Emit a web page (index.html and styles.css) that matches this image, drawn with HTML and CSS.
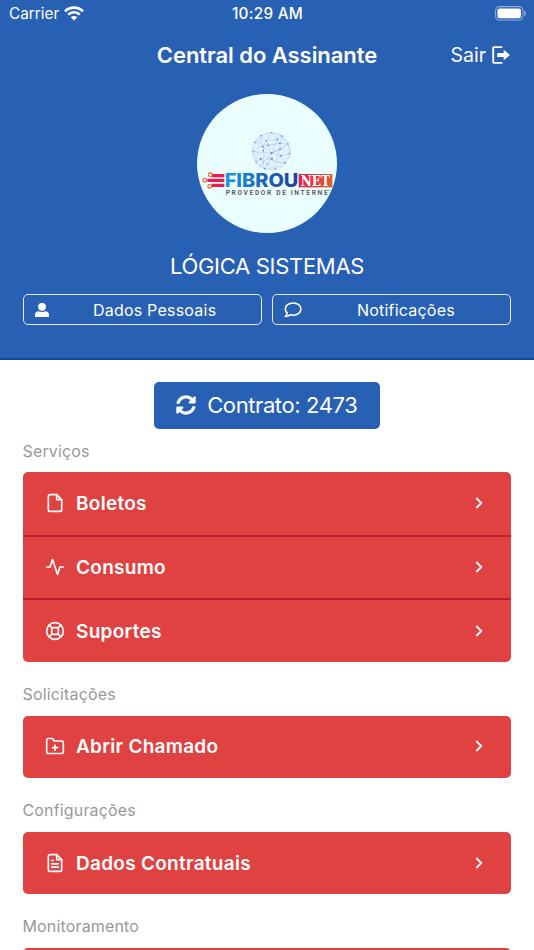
FILE: index.html
```html
<!DOCTYPE html>
<html lang="pt-BR">
<head>
  <meta charset="UTF-8">
  <meta name="viewport" content="width=device-width, initial-scale=1.0">
  <title>Central do Assinante</title>
  <link rel="stylesheet" href="styles.css">
</head>
<body>
  <header class="header">
    <div class="status-bar">
      <div class="carrier">
        <span>Carrier</span>
        <svg width="20" height="15" viewBox="0 0 20 15" fill="none" stroke="#fff" stroke-width="2.6">
          <path d="M1 5.3a12.8 12.8 0 0 1 18 0"/>
          <path d="M4.2 8.7a8.2 8.2 0 0 1 11.6 0"/>
          <path d="M10 14.6L6.7 11.3a4.7 4.7 0 0 1 6.6 0z" fill="#fff" stroke="none"/>
        </svg>
      </div>
      <span class="time">10:29 AM</span>
      <div class="battery">
        <svg width="31" height="15" viewBox="0 0 31 15">
          <rect x=".6" y=".6" width="27.4" height="13.4" rx="4" fill="none" stroke="#93b0da" stroke-width="1.1"/>
          <rect x="2.4" y="2.4" width="23.6" height="9.8" rx="2.2" fill="#fff"/>
          <path d="M29.4 4.8c2.2.9 2.2 4.2 0 5.1z" fill="#93b0da"/>
        </svg>
      </div>
    </div>

    <div class="title-bar">
      <h1>Central do Assinante</h1>
      <a class="logout">
        <span>Sair</span>
        <svg width="19" height="18" viewBox="0 0 19 18">
          <path d="M10.3 1.1H2.2c-.6 0-1 .4-1 1v13.8c0 .6.4 1 1 1h8.1" fill="none" stroke="#fff" stroke-width="1.9"/>
          <path d="M5.2 7h6.5V3.8L18 9l-6.3 5.2V11H5.2z" fill="#fff"/>
        </svg>
      </a>
    </div>

    <!-- Logo do provedor -->
    <div class="avatar">
      <svg width="140" height="139" viewBox="21 18 420 417">
        <defs>
          <linearGradient id="azul" x1="0" x2="1">
            <stop offset="0" stop-color="#179be0"/>
            <stop offset=".55" stop-color="#1f62ba"/>
            <stop offset="1" stop-color="#203f98"/>
          </linearGradient>
          <linearGradient id="vermelho" x1="0" x2="1">
            <stop offset="0" stop-color="#e91c54"/>
            <stop offset="1" stop-color="#dc5b2c"/>
          </linearGradient>
        </defs>
        <circle cx="244" cy="190" r="57" fill="#e2f3fd"/>
        <g fill="none" stroke="#94b5dd" stroke-width="1">
          <circle cx="244" cy="190" r="57" stroke-dasharray="5 3"/>
          <path d="M213 143l32-9 31 10 18 24 6 29-15 28-29 18-32-1-26-20-9-31 5-28z"/>
          <path d="M213 143l16 15 16-24 17 20 14-10-6 22 24 2-19 15 25 14-27 6 12 22-28-4-1 22-20-20-12 19-8-28-18 8 8-27-17-4 23-15-18-13 19-5z"/>
          <path d="M229 158l33-4 8 12-35 6-17 4 27 19 26-12-9 20 11 0-21 16-20-9-12 13 2-28-4-19 11-18 6 14 35-6-1 17-24 12-10 15"/>
          <path d="M194 163l41 9 10 23-37 20M294 168l-49 27-9 28M262 154l-17 41 28 8M205 242l27-32 25 11 28 4M189 191l56 4"/>
        </g>
        <g fill="#4d82c5">
          <circle cx="213" cy="143" r="2"/><circle cx="245" cy="134" r="1.7"/><circle cx="276" cy="144" r="2"/>
          <circle cx="229" cy="158" r="2.3"/><circle cx="262" cy="154" r="2.5"/><circle cx="294" cy="168" r="2"/>
          <circle cx="194" cy="163" r="2"/><circle cx="235" cy="172" r="2.5"/><circle cx="270" cy="166" r="2.4"/>
          <circle cx="218" cy="176" r="2.5"/><circle cx="245" cy="195" r="2.7"/><circle cx="271" cy="183" r="2.6"/>
          <circle cx="299" cy="197" r="2"/><circle cx="189" cy="191" r="2"/><circle cx="220" cy="188" r="2.4"/>
          <circle cx="212" cy="212" r="3"/><circle cx="246" cy="212" r="3"/><circle cx="273" cy="203" r="2.4"/>
          <circle cx="285" cy="225" r="2.4"/><circle cx="232" cy="228" r="2.3"/><circle cx="256" cy="243" r="2"/>
          <circle cx="224" cy="242" r="2"/><circle cx="198" cy="222" r="2"/>
        </g>
        <g fill="none" stroke="#eb1b4d" stroke-width="10">
          <path d="M66 263h37M52 277h51M65 292h38"/>
        </g>
        <g fill="#eafeff" stroke="#e4602e" stroke-width="3.5">
          <circle cx="61" cy="260" r="5.5"/><circle cx="44" cy="277" r="5.5"/><circle cx="59" cy="295" r="5.5"/>
        </g>
        <text class="logo-name" x="104" y="298" textLength="221" lengthAdjust="spacingAndGlyphs" fill="url(#azul)">FIBROU</text>
        <rect x="326" y="258" width="101" height="40" fill="url(#vermelho)"/>
        <text class="logo-net" x="332" y="293" textLength="88" lengthAdjust="spacingAndGlyphs">NET</text>
        <text class="logo-tag" x="107" y="320" textLength="306" lengthAdjust="spacing">PROVEDOR DE INTERNE</text>
        <path d="M414 307h5" stroke="#555" stroke-width="2"/>
      </svg>
    </div>

    <h2 class="client-name">LÓGICA SISTEMAS</h2>

    <div class="actions">
      <a class="action">
        <svg width="14" height="14" viewBox="0 0 14 14" fill="#fff">
          <circle cx="7" cy="3.8" r="3.9"/>
          <path d="M0 14v-2.3c0-2 1.4-3.4 3.5-3.4 2 .8 5 .8 7 0 2.1 0 3.5 1.4 3.5 3.4V14z"/>
        </svg>
        <span>Dados Pessoais</span>
      </a>
      <a class="action">
        <svg width="18" height="16" viewBox="0 0 18 16" fill="none" stroke="#fff" stroke-width="1.6" stroke-linejoin="round">
          <path d="M9.2 1C4.7 1 1.3 3.6 1.3 7c0 1.7.7 3.1 1.9 4.2-.2 1.3-.9 2.4-2 3.3 1.9 0 3.5-.7 4.7-1.7 1 .3 2.1.5 3.3.5 4.4 0 7.700-2.800 7.700-6.300S13.600 1 9.200 1z"/>
        </svg>
        <span>Notificações</span>
      </a>
    </div>
  </header>

  <main class="content">
    <a class="contract">
      <svg width="20" height="20" viewBox="0 0 512 512" fill="#fff">
        <path d="M370.720 133.280C339.458 104.008 298.888 87.962 255.848 88c-77.458.068-144.328 53.178-162.791 126.850-1.344 5.363-6.122 9.150-11.651 9.150H24.103c-7.498 0-13.194-6.807-11.807-14.176C33.933 94.924 134.813 8 256 8c66.448 0 126.791 26.136 171.315 68.685L463.030 40.970C478.149 25.851 504 36.559 504 57.941V192c0 13.255-10.745 24-24 24H345.941c-21.382 0-32.090-25.851-16.971-40.971l41.750-41.749zM32 296h134.059c21.382 0 32.090 25.851 16.971 40.971l-41.750 41.750c31.262 29.273 71.835 45.319 114.876 45.280 77.418-.070 144.315-53.144 162.787-126.849 1.344-5.363 6.122-9.150 11.651-9.150h57.304c7.498 0 13.194 6.807 11.807 14.176C478.067 417.076 377.187 504 256 504c-66.448 0-126.791-26.136-171.315-68.685L48.970 471.030C33.851 486.149 8 475.441 8 454.059V320c0-13.255 10.745-24 24-24z"/>
      </svg>
      <span>Contrato: 2473</span>
    </a>

    <h3 class="section-title">Serviços</h3>
    <div class="menu">
      <a class="menu-item">
        <svg class="icon" viewBox="0 0 24 24">
          <path d="M14 2H6a2 2 0 0 0-2 2v16a2 2 0 0 0 2 2h12a2 2 0 0 0 2-2V8z"/>
          <path d="M14 2v6h6"/>
        </svg>
        <span>Boletos</span>
        <svg class="arrow" viewBox="0 0 8 12"><path d="M1.3 1l5 5-5 5"/></svg>
      </a>
      <a class="menu-item">
        <svg class="icon" viewBox="0 0 24 24">
          <path d="M22 12h-4l-3 9L9 3l-3 9H2"/>
        </svg>
        <span>Consumo</span>
        <svg class="arrow" viewBox="0 0 8 12"><path d="M1.3 1l5 5-5 5"/></svg>
      </a>
      <a class="menu-item">
        <svg class="icon" viewBox="0 0 24 24">
          <circle cx="12" cy="12" r="10"/>
          <rect x="8" y="8" width="8" height="8" rx="2"/>
          <path d="M4.93 4.93l3.8 3.8M15.27 15.27l3.8 3.8M15.27 8.73l3.8-3.8M4.93 19.07l3.8-3.8"/>
        </svg>
        <span>Suportes</span>
        <svg class="arrow" viewBox="0 0 8 12"><path d="M1.3 1l5 5-5 5"/></svg>
      </a>
    </div>

    <h3 class="section-title">Solicitações</h3>
    <div class="menu">
      <a class="menu-item">
        <svg class="icon" viewBox="0 0 24 24">
          <path d="M22 19a2 2 0 0 1-2 2H4a2 2 0 0 1-2-2V5a2 2 0 0 1 2-2h5l2 3h9a2 2 0 0 1 2 2z"/>
          <path d="M12 11v6M9 14h6"/>
        </svg>
        <span>Abrir Chamado</span>
        <svg class="arrow" viewBox="0 0 8 12"><path d="M1.3 1l5 5-5 5"/></svg>
      </a>
    </div>

    <h3 class="section-title">Configurações</h3>
    <div class="menu">
      <a class="menu-item">
        <svg class="icon" viewBox="0 0 24 24">
          <path d="M14 2H6a2 2 0 0 0-2 2v16a2 2 0 0 0 2 2h12a2 2 0 0 0 2-2V8z"/>
          <path d="M14 2v6h6M16 13H8M16 17H8M10 9H8"/>
        </svg>
        <span>Dados Contratuais</span>
        <svg class="arrow" viewBox="0 0 8 12"><path d="M1.3 1l5 5-5 5"/></svg>
      </a>
    </div>

    <h3 class="section-title">Monitoramento</h3>
    <div class="menu">
      <a class="menu-item"></a>
    </div>
  </main>
</body>
</html>
```

FILE: styles.css
```css
* {
  box-sizing: border-box;
}
body {
  font-family: Inter, "Liberation Sans", sans-serif;
  background-color: #fff;
  margin: 0;
  height: 950px;
  overflow: hidden;
}
svg {
  display: block;
  flex-shrink: 0;
}
h1, h2, h3 {
  margin: 0;
}

/* Cabeçalho */
.header {
  height: 360px;
  background-color: #2860b3;
  border-bottom: 2px solid #114991;
  color: #fff;
}
.status-bar {
  display: grid;
  grid-template-columns: 1fr auto 1fr;
  align-items: center;
  height: 27px;
  padding: 0 8px 0 9px;
  font-size: 15.3px;
}
.carrier {
  display: flex;
  align-items: center;
  gap: 5px;
}
.time {
  font-weight: 500;
  letter-spacing: 0.3px;
}
.battery {
  display: flex;
  justify-content: flex-end;
}
.title-bar {
  display: grid;
  grid-template-columns: 1fr auto 1fr;
  align-items: center;
  height: 55px;
  padding: 0 23px;
}
.title-bar h1 {
  grid-column: 2;
  font-size: 22px;
  font-weight: 600;
  letter-spacing: -0.05px;
}
.logout {
  display: flex;
  justify-content: flex-end;
  align-items: center;
  gap: 6px;
  font-size: 19.5px;
}
.avatar {
  width: 140px;
  height: 139px;
  margin: 12px auto 0;
  border-radius: 50%;
  background-color: #eafeff;
  overflow: hidden;
}
.logo-name {
  font-size: 55px;
  font-weight: 800;
}
.logo-net {
  font-family: "DejaVu Serif", serif;
  font-size: 42px;
  font-weight: bold;
  fill: #fff;
}
.logo-tag {
  font-family: Roboto, sans-serif;
  font-size: 20px;
  font-weight: 600;
  fill: #555;
}
.client-name {
  height: 61px;
  line-height: 66px;
  text-align: center;
  font-size: 22px;
  font-weight: 400;
  letter-spacing: -0.3px;
}
.actions {
  display: grid;
  grid-template-columns: 1fr 1fr;
  gap: 10px;
  padding: 0 23px 0 22.5px;
}
.action {
  display: flex;
  align-items: center;
  height: 31px;
  padding-left: 11px;
  border: 1.5px solid #e6edf7;
  border-radius: 5px;
  font-size: 16px;
  letter-spacing: 0.22px;
}
.action span {
  flex: 1;
  text-align: center;
}

/* Conteúdo */
.content {
  padding: 22px 23px 0 22.5px;
}
.contract {
  display: flex;
  align-items: center;
  justify-content: center;
  gap: 11px;
  width: 226px;
  height: 47px;
  padding-bottom: 1px;
  margin: 0 auto;
  border-radius: 5px;
  background-color: #2860b3;
  color: #fff;
  font-size: 22px;
  letter-spacing: -0.4px;
}
.section-title {
  height: 53.7px;
  line-height: 65px;
  font-size: 16px;
  font-weight: 400;
  letter-spacing: 0.16px;
  color: #999;
}
.contract + .section-title {
  height: 43px;
  line-height: 44px;
}
.menu {
  border-radius: 5px;
  background-color: #e04141;
  overflow: hidden;
}
.menu-item {
  display: flex;
  align-items: center;
  height: 62.5px;
  padding: 0 28px 0 22px;
  color: #fff;
  font-size: 19px;
  font-weight: 600;
  letter-spacing: 0.28px;
}
.menu-item + .menu-item {
  height: 63.75px;
  border-top: 2px solid #c01c2b;
}
.icon {
  width: 20px;
  height: 20px;
  margin: -1px 11.5px 0 0;
  fill: none;
  stroke: #fff;
  stroke-width: 2;
  stroke-linecap: round;
  stroke-linejoin: round;
}
.arrow {
  width: 8px;
  height: 12px;
  margin: -1px 0 0 auto;
  fill: none;
  stroke: #fff;
  stroke-width: 1.8;
}
```
